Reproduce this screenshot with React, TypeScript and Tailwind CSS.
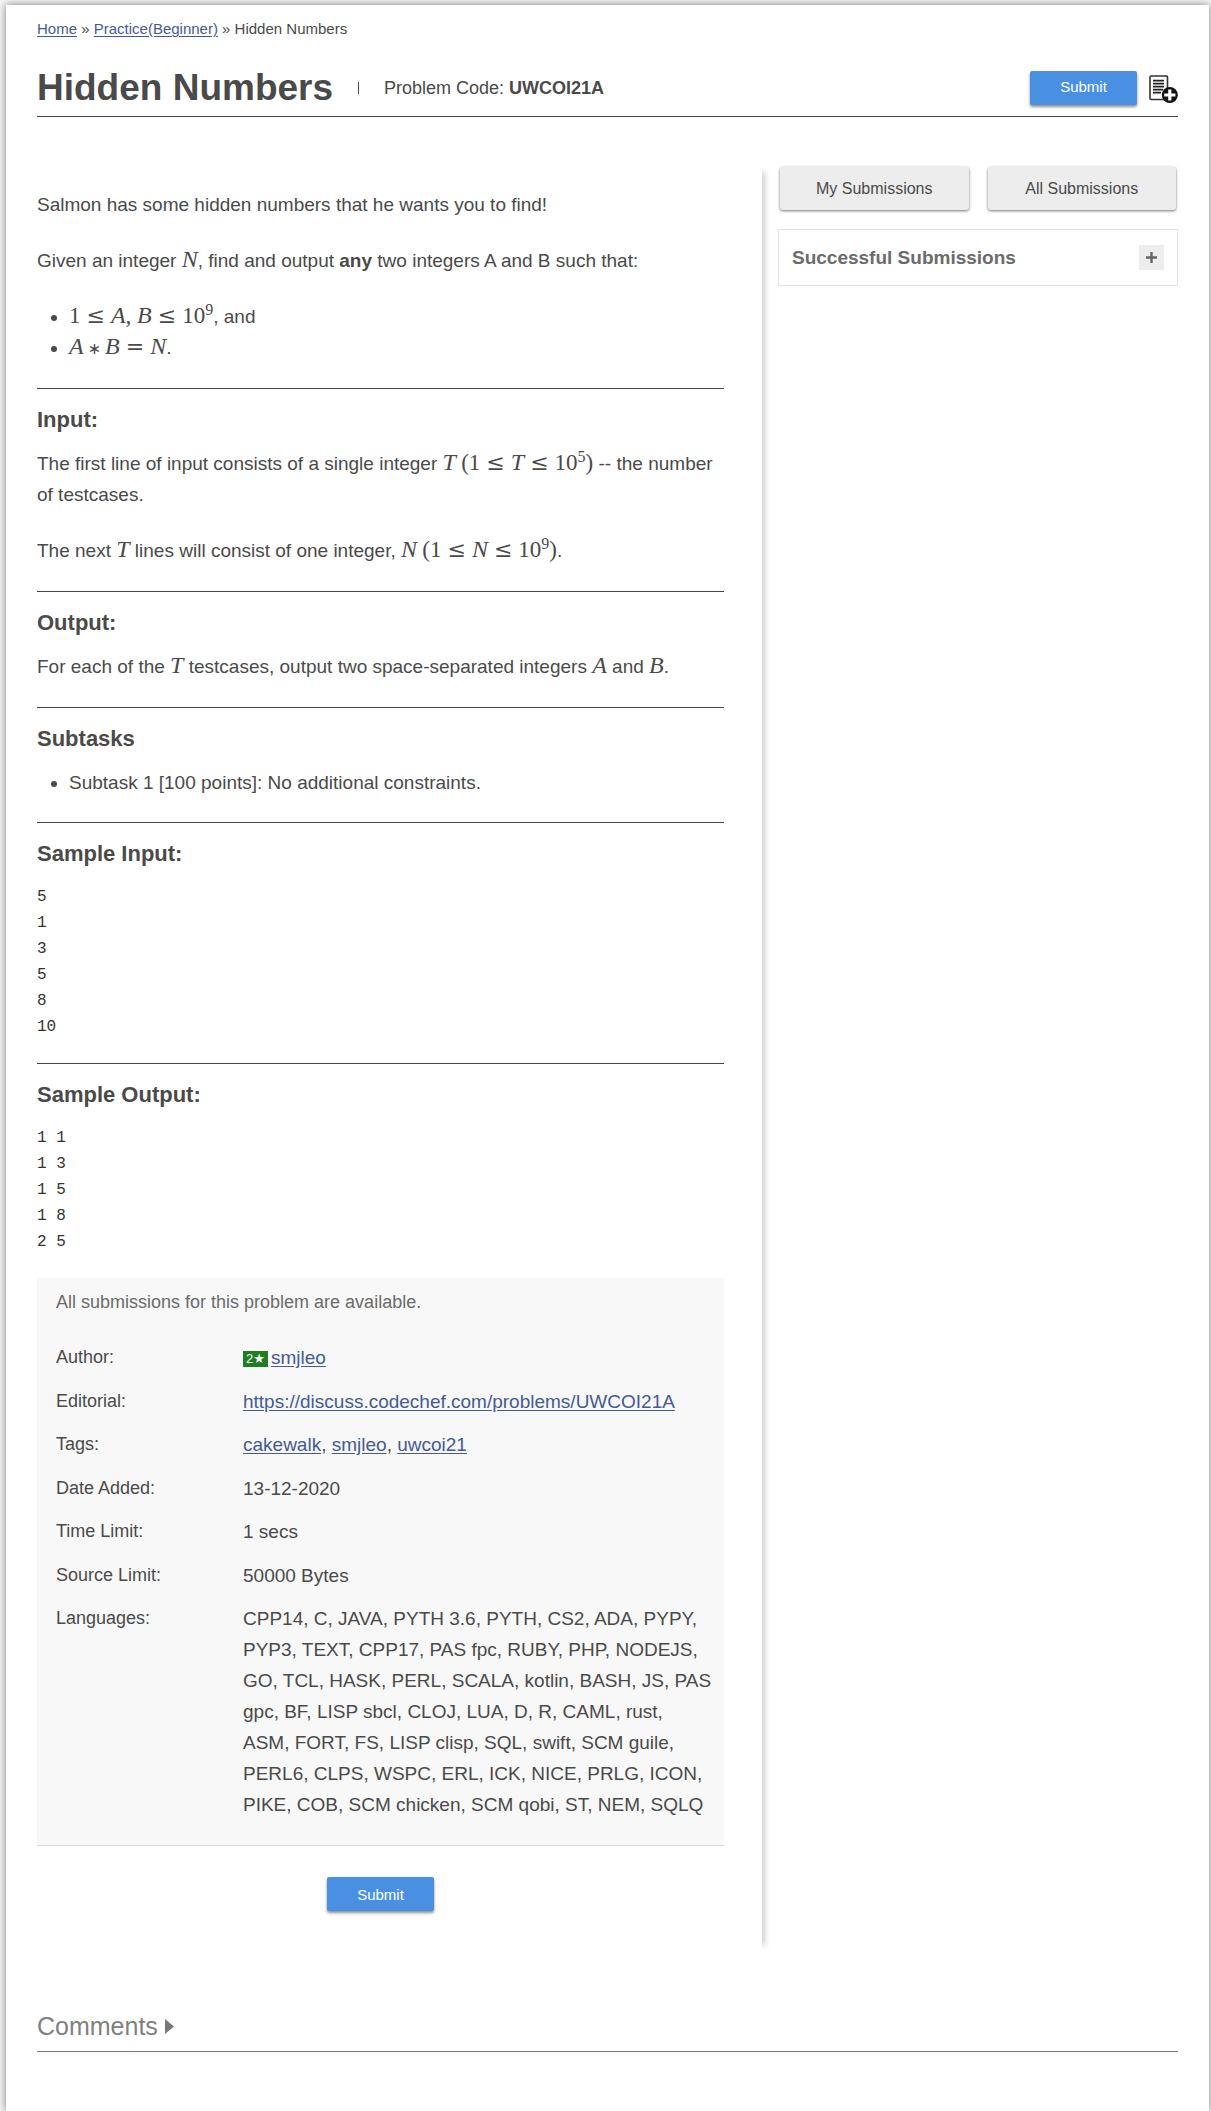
import type { ReactNode } from "react";

const link = "text-[#445a96] underline underline-offset-2";

function Hr() {
  return <hr className="border-0 border-t border-[#454545]" />;
}

function V({ children }: { children: ReactNode }) {
  return (
    <i className="font-['Liberation_Serif',serif] text-[24px] leading-none italic">{children}</i>
  );
}

function R({ children }: { children: ReactNode }) {
  return (
    <span className="font-['Liberation_Serif',serif] text-[23px] leading-none">{children}</span>
  );
}

function Op({ children }: { children: ReactNode }) {
  return (
    <span className="mx-[6px] font-['DejaVu_Serif',serif] text-[22px] leading-none">{children}</span>
  );
}

function Star() {
  return <span className="mx-[4px] font-['DejaVu_Sans',sans-serif] text-[16px] leading-none">∗</span>;
}

function Pow({ e }: { e: string }) {
  return (
    <R>
      10
      <sup className="text-[16px] leading-none">{e}</sup>
    </R>
  );
}

function Section({ title, children }: { title: string; children: ReactNode }) {
  return (
    <section>
      <Hr />
      <h3 className="pt-[16px] pb-[13px] text-[22px] leading-[30px] font-bold">{title}</h3>
      {children}
    </section>
  );
}

function Submit() {
  return (
    <button
      type="button"
      className="h-[34px] w-[107px] rounded-[2px] bg-[#4a90e2] text-[15px] text-white shadow-[0_2px_3px_rgba(0,0,0,0.45)]"
    >
      Submit
    </button>
  );
}

function AddToListIcon() {
  return (
    <svg width="29" height="28" viewBox="0 0 29 28" aria-hidden="true">
      <rect x="1" y="1" width="17.5" height="23.5" rx="1" fill="#fff" stroke="#333" strokeWidth="1.6" />
      <path d="M4 5.7h11M4 8.7h11M4 11.7h11M4 14.7h10M4 17.7h8" stroke="#222" strokeWidth="1.7" />
      <circle cx="20.8" cy="20" r="8" fill="#111" />
      <path d="M20.8 14.4v11.2M15.2 20h11.2" stroke="#fff" strokeWidth="3.2" />
    </svg>
  );
}

const languages = [
  "CPP14, C, JAVA, PYTH 3.6, PYTH, CS2, ADA, PYPY,",
  "PYP3, TEXT, CPP17, PAS fpc, RUBY, PHP, NODEJS,",
  "GO, TCL, HASK, PERL, SCALA, kotlin, BASH, JS, PAS",
  "gpc, BF, LISP sbcl, CLOJ, LUA, D, R, CAML, rust,",
  "ASM, FORT, FS, LISP clisp, SQL, swift, SCM guile,",
  "PERL6, CLPS, WSPC, ERL, ICK, NICE, PRLG, ICON,",
  "PIKE, COB, SCM chicken, SCM qobi, ST, NEM, SQLQ",
].join("\n");

const facts: [string, ReactNode][] = [
  [
    "Author:",
    <>
      <span className="mr-[3px] inline-flex h-[16px] items-center bg-[#1f7d22] px-[3px] align-middle text-[13px] leading-none text-white">
        2<span className="font-['DejaVu_Sans',sans-serif] text-[13px]">★</span>
      </span>
      <a href="#smjleo" className={link}>smjleo</a>
    </>,
  ],
  [
    "Editorial:",
    <a href="#editorial" className={link}>https://discuss.codechef.com/problems/UWCOI21A</a>,
  ],
  [
    "Tags:",
    <>
      <a href="#cakewalk" className={link}>cakewalk</a>, <a href="#tag-smjleo" className={link}>smjleo</a>,{" "}
      <a href="#uwcoi21" className={link}>uwcoi21</a>
    </>,
  ],
  ["Date Added:", "13-12-2020"],
  ["Time Limit:", "1 secs"],
  ["Source Limit:", "50000 Bytes"],
  ["Languages:", languages],
];

const pre = "pt-[2px] font-['Liberation_Mono',monospace] text-[16px] leading-[26px] text-[#333]";
const grayButton =
  "h-[43px] flex-1 rounded-[3px] bg-[#ededed] text-[16px] text-[#4a4a4a] shadow-[0_1px_3px_rgba(0,0,0,0.55)]";

export default function App() {
  return (
    <div className="min-h-screen bg-[#f6f6f6] pt-[5px] pr-[2px] pl-[6px] font-['Liberation_Sans',Arial,sans-serif] text-[#4a4a4a]">
      <main className="min-h-[calc(100vh-5px)] bg-white pr-[31px] pl-[31px] shadow-[0_0_8px_rgba(0,0,0,0.5)]">
        <nav aria-label="Breadcrumb" className="pt-[14px] text-[15px] leading-[20px]">
          <a href="#home" className={link}>Home</a> » <a href="#practice" className={link}>Practice(Beginner)</a> » Hidden
          Numbers
        </nav>

        <header className="mt-[21px] flex items-center border-b border-[#454545] pb-[1px]">
          <h1 className="text-[37px] leading-[55px] font-bold">Hidden Numbers</h1>
          <span className="mx-[25px] h-[12px] w-px bg-[#4a4a4a]" />
          <p className="text-[18px] leading-[28px]">
            Problem Code: <b>UWCOI21A</b>
          </p>
          <div className="ml-auto flex items-center gap-[12px]">
            <Submit />
            <button type="button" aria-label="Add to list" className="pt-[3px]">
              <AddToListIcon />
            </button>
          </div>
        </header>

        <div className="mt-[50px] flex">
          <article className="min-w-0 flex-1 pt-[22px] pr-[38px] pb-[39px] text-[19px] leading-[31px]">
            <p className="mb-[25px]">Salmon has some hidden numbers that he wants you to find!</p>
            <p className="mb-[25px]">
              Given an integer <V>N</V>, find and output <b>any</b> two integers A and B such that:
            </p>
            <ul className="mb-[25px] list-disc pl-[32px]">
              <li>
                <R>1</R><Op>≤</Op><V>A</V><R>, </R><V>B</V><Op>≤</Op><Pow e="9" />, and
              </li>
              <li>
                <V>A</V><Star /><V>B</V><Op>=</Op><V>N</V>.
              </li>
            </ul>
            <Section title="Input:">
              <p className="mb-[25px]">
                The first line of input consists of a single integer <V>T</V> <R>(1</R><Op>≤</Op><V>T</V><Op>≤</Op>
                <Pow e="5" /><R>)</R> -- the number <span>of testcases.</span>
              </p>
              <p className="mb-[25px]">
                The next <V>T</V> lines will consist of one integer, <V>N</V> <R>(1</R><Op>≤</Op><V>N</V><Op>≤</Op>
                <Pow e="9" /><R>)</R>.
              </p>
            </Section>
            <Section title="Output:">
              <p className="mb-[25px]">
                For each of the <V>T</V> testcases, output two space-separated integers <V>A</V> and <V>B</V>.
              </p>
            </Section>
            <Section title="Subtasks">
              <ul className="mb-[24px] list-disc pl-[32px]">
                <li>Subtask 1 [100 points]: No additional constraints.</li>
              </ul>
            </Section>
            <Section title="Sample Input:">
              <pre className={pre}>{"5\n1\n3\n5\n8\n10"}</pre>
            </Section>
            <div className="mt-[23px]">
              <Section title="Sample Output:">
                <pre className={pre}>{"1 1\n1 3\n1 5\n1 8\n2 5"}</pre>
              </Section>
            </div>

            <div className="mt-[23px] border-b border-[#d8d8d8] bg-[#f8f8f8] pt-[9px] pr-[8px] pb-[12px] pl-[19px]">
              <p className="mb-[24px] text-[18px] text-[#6a6a6a]">All submissions for this problem are available.</p>
              <table className="w-full">
                <tbody>
                  {facts.map(([name, value]) => (
                    <tr key={name} className="group align-top">
                      <th scope="row" className="w-[187px] p-0 text-left text-[18px] font-normal">{name}</th>
                      <td className="p-0 pb-[12px] whitespace-pre-line group-odd:pb-[13px]">{value}</td>
                    </tr>
                  ))}
                </tbody>
              </table>
            </div>
            <div className="mt-[31px] flex justify-center">
              <Submit />
            </div>
          </article>

          <div className="w-[8px] overflow-hidden py-[6px]">
            <div className="h-full w-0 shadow-[0_0_6px_1px_rgba(0,0,0,0.6)]" />
          </div>

          <aside className="ml-[8px] w-[400px]">
            <div className="flex gap-[19px] px-[2px]">
              <button type="button" className={grayButton}>My Submissions</button>
              <button type="button" className={grayButton}>All Submissions</button>
            </div>
            <div className="mt-[19px] flex items-center justify-between border border-[#e4e4e4] px-[13px] py-[14px]">
              <h2 className="text-[19px] leading-[27px] font-bold text-[#6b6b6b]">Successful Submissions</h2>
              <button
                type="button"
                aria-label="Expand successful submissions"
                className="flex size-[25px] items-center justify-center bg-[#ededed]"
              >
                <svg width="11" height="11" viewBox="0 0 11 11" aria-hidden="true">
                  <path d="M5.5 0v11M0 5.5h11" stroke="#666" strokeWidth="2.4" />
                </svg>
              </button>
            </div>
          </aside>
        </div>

        <div className="mt-[60px] border-b border-[#7c7c7c] pb-[9px]">
          <button type="button" className="flex items-center gap-[7px] text-[25px] leading-[32px] text-[#808080]">
            Comments
            <svg width="9" height="15" viewBox="0 0 9 15" aria-hidden="true">
              <path d="M0 0v15l9-7.5z" fill="#777" />
            </svg>
          </button>
        </div>
      </main>
    </div>
  );
}
